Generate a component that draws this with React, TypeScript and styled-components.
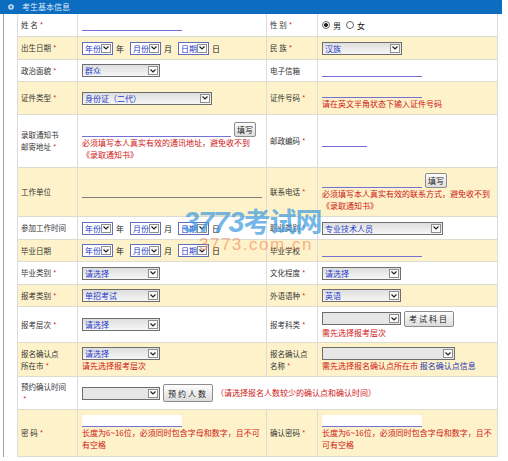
import React from 'react';
import styled, { createGlobalStyle } from 'styled-components';

const Global = createGlobalStyle`
  html, body { margin: 0; padding: 0; background: #fff; }
  body { font-family: "Noto Sans CJK SC", "Noto Sans", sans-serif; }
  * { box-sizing: border-box; }
`;

const Page = styled.div`
  position: relative;
  width: 508px;
  height: 461px;
  overflow: hidden;
`;

const Header = styled.div`
  width: 502px;
  height: 14px;
  background: #0b6cc0;
  display: flex;
  align-items: center;
  gap: 8px;
  padding-left: 8px;
  color: #dcebfa;
  font-size: 8px;
  line-height: 14px;
`;

const Frame = styled.div`
  margin-left: 3px;
  border-left: 1px solid #a3a3a3;
  padding-left: 13px;
  width: fit-content;
`;

const Table = styled.div`
  width: 481px;
  border-left: 1px solid #dcdcdc;
`;

const Row = styled.div<{ $h: number; $alt?: boolean }>`
  display: grid;
  grid-template-columns: 60px 189px 51px 180px;
  height: ${(p) => p.$h}px;
  background: ${(p) => (p.$alt ? '#fdf2c9' : '#ffffff')};
  border-bottom: 1px solid #dedbd0;
`;

const Label = styled.div`
  border-right: 1px solid #dcdcdc;
  display: flex;
  align-items: center;
  padding-left: 3px;
  font-size: 7.5px;
  line-height: 12px;
  color: #333;
  white-space: nowrap;
`;

const Star = styled.span`
  color: #e02424;
  margin-left: 2px;
`;

const Value = styled.div<{ $span?: boolean }>`
  border-right: 1px solid #dcdcdc;
  grid-column: ${(p) => (p.$span ? '2 / 5' : 'auto')};
  display: flex;
  flex-direction: column;
  justify-content: center;
  align-items: flex-start;
  padding-left: 4px;
  font-size: 8px;
  color: #333;
`;

const Inline = styled.div<{ $end?: boolean }>`
  display: flex;
  align-items: ${(p) => (p.$end ? 'flex-end' : 'center')};
  gap: 3px;
  white-space: nowrap;
`;

const Field = styled.span<{ $w: number; $grey?: boolean; $box?: boolean }>`
  display: block;
  width: ${(p) => p.$w}px;
  height: 12px;
  background: ${(p) => (p.$box ? '#ffffff' : 'transparent')};
  border-bottom: 1px solid ${(p) => (p.$grey ? '#7c7c7c' : '#7471d2')};
`;

const Btn = styled.span<{ $w: number; $h: number; $ls?: number }>`
  display: inline-flex;
  align-items: center;
  justify-content: center;
  width: ${(p) => p.$w}px;
  height: ${(p) => p.$h}px;
  border: 1px solid #8d8d8d;
  border-radius: 2px;
  background: linear-gradient(#fdfdfd, #dcdcdc);
  font-size: 8px;
  color: #222;
  letter-spacing: ${(p) => p.$ls ?? 0}px;
`;

const Note = styled.div`
  color: #cf1414;
  font-size: 8px;
  line-height: 12px;
  white-space: nowrap;
`;

const Link = styled.span`
  color: #1d36b4;
`;

const Sel = styled.span<{ $w: number; $kind?: 'date' | 'empty' | 'normal' }>`
  display: inline-flex;
  align-items: center;
  width: ${(p) => p.$w}px;
  height: 13px;
  border: 1px solid ${(p) => (p.$kind === 'date' ? '#5f6fb8' : '#6e6e6e')};
  background: ${(p) =>
    p.$kind === 'date'
      ? '#ffffff'
      : p.$kind === 'empty'
      ? '#e6e6e6'
      : 'linear-gradient(#dedede, #f6f6f6)'};
`;

const SelText = styled.span`
  flex: 1;
  color: #1d39c9;
  font-size: 8px;
  line-height: 11px;
  padding-left: 2px;
  overflow: hidden;
  white-space: nowrap;
`;

const SelArrow = styled.span`
  width: 10px;
  height: 9px;
  margin-right: 1px;
  border: 1px solid #8f8f8f;
  background: #fbfbfb;
  display: flex;
  align-items: center;
  justify-content: center;
`;

const Unit = styled.span`
  margin: 0 3px 0 0;
  font-size: 8px;
  color: #222;
`;

const RadioGroup = styled.div`
  display: flex;
  align-items: center;
  gap: 3px;
  font-size: 8px;
  color: #222;
`;

const Radio = styled.span<{ $on?: boolean }>`
  display: inline-block;
  width: 8px;
  height: 8px;
  border-radius: 50%;
  border: 1px solid #666;
  background: ${(p) =>
    p.$on ? 'radial-gradient(circle, #222 0 1.7px, #fff 2.2px)' : '#fff'};
`;

const RadioText = styled.span`
  margin-right: 2px;
`;

const Watermark = styled.div`
  position: absolute;
  left: 183px;
  top: 206px;
  pointer-events: none;
  display: flex;
  flex-direction: column;
`;

const WmBig = styled.span`
  font-family: "Liberation Sans", "Noto Sans CJK SC", sans-serif;
  font-style: italic;
  font-weight: bold;
  font-size: 29px;
  line-height: 30px;
  letter-spacing: -1px;
  color: rgba(64, 156, 224, 0.72);
`;

const WmBigCJK = styled.span`
  font-family: "Noto Sans CJK SC", sans-serif;
  font-style: normal;
  font-weight: bold;
  font-size: 27px;
`;

const WmSmall = styled.span`
  margin-left: 16px;
  margin-top: -1px;
  font-family: "Liberation Sans", sans-serif;
  font-size: 17px;
  line-height: 18px;
  letter-spacing: 1.5px;
  color: rgba(240, 118, 78, 0.55);
`;

const Chevron = () => (
  <svg width="6" height="4" viewBox="0 0 6 4">
    <polyline points="0.5,0.5 3,3 5.5,0.5" fill="none" stroke="#222" strokeWidth="1.2" />
  </svg>
);

const Select = ({ w, text, kind = 'normal' }: { w: number; text?: string; kind?: 'date' | 'empty' | 'normal' }) => (
  <Sel $w={w} $kind={kind}>
    <SelText>{text}</SelText>
    <SelArrow>
      <Chevron />
    </SelArrow>
  </Sel>
);

const DateSelect = () => (
  <Inline>
    <Select w={31} text="年份" kind="date" />
    <Unit>年</Unit>
    <Select w={31} text="月份" kind="date" />
    <Unit>月</Unit>
    <Select w={31} text="日期" kind="date" />
    <Unit>日</Unit>
  </Inline>
);

const L = ({ children, star }: { children: React.ReactNode; star?: boolean }) => (
  <Label>
    <span>
      {children}
      {star && <Star>*</Star>}
    </span>
  </Label>
);

const HeaderIcon = () => (
  <svg width="6" height="6" viewBox="0 0 6 6">
    <circle cx="3" cy="3" r="2.8" fill="#cfe2f6" />
    <path d="M1.5 3h3M3 1.5v3" stroke="#0b6cc0" strokeWidth="0.9" />
  </svg>
);

export default function App() {
  return (
    <Page>
      <Global />
      <Header>
        <HeaderIcon />
        <span>考生基本信息</span>
      </Header>
      <Frame>
        <Table>
          <Row $h={23}>
            <L star>姓 名</L>
            <Value><Field $w={100} /></Value>
            <L star>性 别</L>
            <Value>
              <RadioGroup>
                <Radio $on />
                <RadioText>男</RadioText>
                <Radio />
                <RadioText>女</RadioText>
              </RadioGroup>
            </Value>
          </Row>
          <Row $h={23} $alt>
            <L star>出生日期</L>
            <Value><DateSelect /></Value>
            <L star>民 族</L>
            <Value><Select w={80} text="汉族" /></Value>
          </Row>
          <Row $h={22}>
            <L star>政治面貌</L>
            <Value><Select w={78} text="群众" /></Value>
            <L>电子信箱</L>
            <Value><Field $w={100} /></Value>
          </Row>
          <Row $h={33} $alt>
            <L star>证件类型</L>
            <Value><Select w={130} text="身份证（二代）" /></Value>
            <L star>证件号码</L>
            <Value>
              <Field $w={100} />
              <Note>请在英文半角状态下输入证件号码</Note>
            </Value>
          </Row>
          <Row $h={53}>
            <L star>录取通知书<br />邮寄地址</L>
            <Value>
              <Inline $end>
                <Field $w={149} />
                <Btn $w={22} $h={15}>填写</Btn>
              </Inline>
              <Note>必须填写本人真实有效的通讯地址，避免收不到</Note>
              <Note>《录取通知书》</Note>
            </Value>
            <L star>邮政编码</L>
            <Value><Field $w={45} /></Value>
          </Row>
          <Row $h={49} $alt>
            <L>工作单位</L>
            <Value><Field $w={180} $grey /></Value>
            <L star>联系电话</L>
            <Value>
              <Inline $end>
                <Field $w={100} />
                <Btn $w={22} $h={15}>填写</Btn>
              </Inline>
              <Note>必须填写本人真实有效的联系方式，避免收不到</Note>
              <Note>《录取通知书》</Note>
            </Value>
          </Row>
          <Row $h={23}>
            <L>参加工作时间</L>
            <Value><DateSelect /></Value>
            <L star>职业类别</L>
            <Value><Select w={121} text="专业技术人员" /></Value>
          </Row>
          <Row $h={22} $alt>
            <L>毕业日期</L>
            <Value><DateSelect /></Value>
            <L>毕业学校</L>
            <Value><Field $w={100} /></Value>
          </Row>
          <Row $h={23}>
            <L star>毕业类别</L>
            <Value><Select w={78} text="请选择" /></Value>
            <L star>文化程度</L>
            <Value><Select w={79} text="请选择" /></Value>
          </Row>
          <Row $h={22} $alt>
            <L star>报考类别</L>
            <Value><Select w={78} text="单招考试" /></Value>
            <L star>外语语种</L>
            <Value><Select w={79} text="英语" /></Value>
          </Row>
          <Row $h={36}>
            <L star>报考层次</L>
            <Value><Select w={78} text="请选择" /></Value>
            <L star>报考科类</L>
            <Value>
              <Inline>
                <Select w={79} kind="empty" />
                <Btn $w={50} $h={16} $ls={2}>考试科目</Btn>
              </Inline>
              <Note>需先选择报考层次</Note>
            </Value>
          </Row>
          <Row $h={34} $alt>
            <L star>报名确认点<br />所在市</L>
            <Value>
              <Select w={78} text="请选择" />
              <Note>请先选择报考层次</Note>
            </Value>
            <L star>报名确认点<br />名称</L>
            <Value>
              <Select w={133} kind="empty" />
              <Note>需先选择报名确认点所在市 <Link>报名确认点信息</Link></Note>
            </Value>
          </Row>
          <Row $h={33}>
            <L star>预约确认时间<br /></L>
            <Value $span>
              <Inline>
                <Select w={78} kind="empty" />
                <Btn $w={50} $h={18} $ls={2}>预约人数</Btn>
                <Note>（请选择报名人数较少的确认点和确认时间）</Note>
              </Inline>
            </Value>
          </Row>
          <Row $h={47} $alt>
            <L star>密 码</L>
            <Value>
              <Field $w={100} $box />
              <Note>长度为6~16位，必须同时包含字母和数字，且不可</Note>
              <Note>有空格</Note>
            </Value>
            <L star>确认密码</L>
            <Value>
              <Field $w={100} $box />
              <Note>长度为6~16位，必须同时包含字母和数字，且不</Note>
              <Note>可有空格</Note>
            </Value>
          </Row>
        </Table>
      </Frame>
      <Watermark>
        <WmBig>3773<WmBigCJK>考试网</WmBigCJK></WmBig>
        <WmSmall>3773.com.cn</WmSmall>
      </Watermark>
    </Page>
  );
}
